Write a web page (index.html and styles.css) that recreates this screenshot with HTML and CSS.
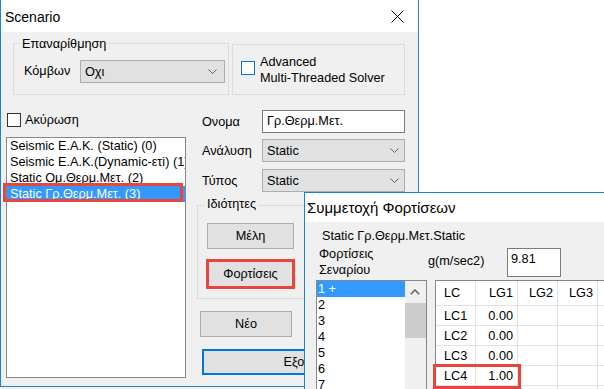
FILE: index.html
```html
<!DOCTYPE html>
<html>
<head>
<meta charset="utf-8">
<link rel="stylesheet" href="styles.css">
</head>
<body>
<div class="win main">
  <div class="titlebar">
    <span class="ttl">Scenario</span>
    <svg class="close" width="13" height="13" viewBox="0 0 13 13"><path d="M0.5 0.5 L12.5 12.5 M12.5 0.5 L0.5 12.5" stroke="#000" stroke-width="1" fill="none"/></svg>
  </div>
  <div class="mbody">
    <div class="toprow">
      <div class="group g1">
        <span class="legend">Επαναρίθμηση</span>
        <span class="g1lbl">Κόμβων</span>
        <div class="combo c145"><span>Οχι</span><svg class="chev" width="9" height="5" viewBox="0 0 9 5"><polyline points="0.5,0.5 4.5,4.5 8.5,0.5" fill="none" stroke="#606060" stroke-width="1"/></svg></div>
      </div>
      <div class="group g2">
        <span class="cb blue"></span>
        <span class="adv">Advanced<br>Multi-Threaded Solver</span>
      </div>
    </div>
    <div class="cols">
      <div class="leftcol">
        <div class="chkrow"><span class="cb dark"></span><span class="chklbl">Ακύρωση</span></div>
        <div class="listbox">
          <div class="item">Seismic E.A.K. (Static) (0)</div>
          <div class="item">Seismic E.A.K.(Dynamic-ετi) (1)</div>
          <div class="item">Static Ομ.Θερμ.Μετ. (2)</div>
          <div class="item sel">Static Γρ.Θερμ.Μετ. (3)</div>
          <span class="hlbox lb"></span>
        </div>
      </div>
      <div class="rightcol">
        <div class="frow"><span class="lbl">Ονομα</span><div class="input">Γρ.Θερμ.Μετ.</div></div>
        <div class="frow"><span class="lbl">Ανάλυση</span><div class="combo c143"><span>Static</span><svg class="chev" width="9" height="5" viewBox="0 0 9 5"><polyline points="0.5,0.5 4.5,4.5 8.5,0.5" fill="none" stroke="#606060" stroke-width="1"/></svg></div></div>
        <div class="frow r3"><span class="lbl">Τύπος</span><div class="combo c143"><span>Static</span><svg class="chev" width="9" height="5" viewBox="0 0 9 5"><polyline points="0.5,0.5 4.5,4.5 8.5,0.5" fill="none" stroke="#606060" stroke-width="1"/></svg></div></div>
        <div class="group props">
          <span class="legend lg2">Ιδιότητες</span>
          <div class="btn">Μέλη</div>
          <div class="btn hl">Φορτίσεις</div>
        </div>
        <div class="btn newb">Νέο</div>
        <div class="btn exitb">Εξοδος</div>
      </div>
    </div>
  </div>
</div>

<div class="win dlg">
  <div class="titlebar dtitle">Συμμετοχή Φορτίσεων</div>
  <div class="dbody">
    <div class="dline1">Static Γρ.Θερμ.Μετ.Static</div>
    <div class="drow2">
      <div class="fl">Φορτίσεις<br>Σεναρίου</div>
      <div class="gl">g(m/sec2)</div>
      <div class="gin">9.81</div>
    </div>
    <div class="listrow">
      <div class="dlist">
        <div class="items">
          <div class="ditem sel">1 +</div>
          <div class="ditem">2</div>
          <div class="ditem">3</div>
          <div class="ditem">4</div>
          <div class="ditem">5</div>
          <div class="ditem">6</div>
          <div class="ditem">7</div>
          <div class="ditem">8</div>
        </div>
        <div class="sbar">
          <div class="sarrow"><svg width="10" height="6" viewBox="0 0 10 6"><polyline points="0.8,5.2 5,1 9.2,5.2" fill="none" stroke="#606060" stroke-width="1.5"/></svg></div>
          <div class="thumb"></div>
        </div>
      </div>
      <div class="grid">
        <div class="gt">
          <div class="c l">LC</div><div class="c">LG1</div><div class="c">LG2</div><div class="c">LG3</div><div class="c"></div>
          <div class="c l">LC1</div><div class="c">0.00</div><div class="c"></div><div class="c"></div><div class="c"></div>
          <div class="c l">LC2</div><div class="c">0.00</div><div class="c"></div><div class="c"></div><div class="c"></div>
          <div class="c l">LC3</div><div class="c">0.00</div><div class="c"></div><div class="c"></div><div class="c"></div>
          <div class="c l">LC4</div><div class="c">1.00</div><div class="c"></div><div class="c"></div><div class="c"></div>
          <div class="c l">LC5</div><div class="c">0.00</div><div class="c"></div><div class="c"></div><div class="c"></div>
        </div>
        <span class="hlbox gb"></span>
      </div>
    </div>
  </div>
</div>
</body>
</html>
```

FILE: styles.css
```css
* { box-sizing: border-box; }
html, body {
  margin: 0;
  padding: 0;
  width: 604px;
  height: 389px;
  overflow: hidden;
}
html { background: linear-gradient(to bottom, #ffffff 387px, #f0f0f0 387px); }
body {
  font-family: "Liberation Sans", Arial, sans-serif;
  font-size: 12.7px;
  color: #000;
  position: relative;
}
.win {
  position: absolute;
  background: #f0f0f0;
  overflow: hidden;
}
.main {
  left: 0;
  top: 0;
  width: 419px;
  height: 387px;
  border: 1px solid #1883d7;
  border-top: 0;
}
.titlebar {
  background: #fff;
  display: flex;
  align-items: center;
  justify-content: space-between;
}
.main .titlebar {
  height: 32px;
  padding: 1px 14px 0 4px;
  font-size: 14px;
}
.close { display: block; }

.toprow {
  display: flex;
  align-items: flex-start;
  margin: 11px 0 0 12px;
}
.group {
  position: relative;
  border: 1px solid #dcdcdc;
}
.legend {
  position: absolute;
  top: -8px;
  left: 6px;
  padding: 0 2px;
  background: #f0f0f0;
  line-height: 16px;
  white-space: nowrap;
}
.g1 {
  width: 216px;
  height: 52px;
  padding: 16px 0 0 10px;
  display: flex;
  align-items: flex-start;
}
.g1lbl {
  width: 56px;
  line-height: 23px;
}
.g2 {
  width: 173px;
  height: 51px;
  margin: 1px 0 0 3px;
  padding: 9px 0 0 8px;
  display: flex;
  align-items: flex-start;
}
.cb {
  width: 14px;
  height: 14px;
  border: 1px solid #333;
  background: #fff;
  flex: none;
}
.cb.blue {
  border-color: #0078d7;
  margin-top: 7px;
}
.adv {
  margin-left: 5px;
  line-height: 16px;
}
.combo {
  height: 23px;
  background: #e1e1e1;
  border: 1px solid #adadad;
  display: flex;
  align-items: center;
  justify-content: space-between;
  padding: 0 5px 0 4px;
}
.c145 { width: 145px; padding-right: 7px; }
.c143 { width: 143px; }
.chev { display: block; }

.cols {
  display: flex;
  align-items: flex-start;
}
.leftcol {
  margin-left: 5px;
  padding-top: 17px;
  width: 180px;
}
.chkrow {
  display: flex;
  align-items: center;
  height: 16px;
}
.chkrow .cb { margin-left: 1px; }
.chklbl { margin-left: 4px; }
.listbox {
  position: relative;
  margin-top: 9px;
  height: 241px;
  border: 1px solid #828790;
  background: #fff;
}
.item {
  line-height: 16px;
  padding-left: 3px;
  white-space: nowrap;
  overflow: hidden;
}
.item.sel, .ditem.sel {
  background: #3399ff;
  color: #fff;
}
.hlbox {
  position: absolute;
  border: 3px solid #e8453c;
}
.hlbox.lb {
  left: -4px;
  top: 45px;
  width: 180px;
  height: 19px;
}

.rightcol {
  margin-left: 11px;
  padding-top: 15px;
  width: 210px;
}
.frow {
  display: flex;
  align-items: center;
  height: 23px;
}
.frow + .frow { margin-top: 6px; }
.frow.r3 { margin-top: 7px; }
.frow .lbl {
  width: 65px;
  padding-left: 5px;
}
.input {
  width: 143px;
  height: 23px;
  border: 1px solid #7a7a7a;
  background: #fff;
  padding-left: 4px;
  line-height: 21px;
}
.props {
  margin-top: 13px;
  width: 130px;
  height: 94px;
  padding: 17px 0 0 9px;
}
.lg2 { top: -10px; left: 7px; }
.btn {
  position: relative;
  width: 87px;
  height: 26px;
  background: #e1e1e1;
  border: 1px solid #adadad;
  display: flex;
  align-items: center;
  justify-content: center;
}
.btn.hl { margin-top: 12px; }
.btn.hl::after {
  content: "";
  position: absolute;
  left: -2px;
  right: -2px;
  top: -3px;
  bottom: -3px;
  border: 3px solid #e8453c;
}
.newb {
  margin: 12px 0 0 3px;
  width: 92px;
}
.exitb {
  margin: 12px 0 0 5px;
  width: 204px;
  border: 2px solid #0078d7;
}

.dlg {
  left: 304px;
  top: 192px;
  width: 310px;
  height: 210px;
  border: 1px solid #1883d7;
  border-right: 0;
  border-bottom: 0;
}
.dtitle {
  height: 29px;
  padding-left: 2px;
  font-size: 15px;
}
.dline1 {
  padding: 6px 0 0 17px;
  line-height: 16px;
}
.drow2 {
  display: flex;
  align-items: flex-start;
  height: 34px;
  margin-top: 2px;
}
.fl {
  margin-left: 14px;
  width: 109px;
  line-height: 16px;
}
.gl {
  margin-top: 7px;
  width: 79px;
  line-height: 16px;
}
.gin {
  margin-top: 2px;
  width: 54px;
  height: 29px;
  border: 1px solid #7a7a7a;
  background: #fff;
  padding: 2px 0 0 3px;
  line-height: 16px;
}
.listrow {
  display: flex;
  align-items: flex-start;
}
.dlist {
  margin-left: 11px;
  width: 111px;
  height: 130px;
  border: 1px solid #828790;
  background: #fff;
  display: flex;
}
.items { width: 88px; }
.ditem {
  line-height: 16px;
  padding-left: 1px;
}
.sbar {
  width: 21px;
  background: #f0f0f0;
}
.sarrow {
  height: 21px;
  display: flex;
  align-items: center;
  justify-content: center;
  padding-right: 1px;
}
.thumb {
  margin-top: 1px;
  height: 35px;
  background: #cdcdcd;
}
.grid {
  position: relative;
  margin-left: 8px;
  width: 200px;
  height: 130px;
  border-left: 1px solid #828790;
  border-top: 1px solid #828790;
  background: #fff;
}
.gt {
  display: grid;
  grid-template-columns: 40px 42px 40px 40px 40px;
  grid-template-rows: 25px repeat(5, 20px);
}
.c {
  border-right: 1px solid #e3e3e3;
  border-bottom: 1px solid #e3e3e3;
  display: flex;
  align-items: center;
  justify-content: flex-end;
  padding-right: 4px;
}
.c.l {
  justify-content: flex-start;
  padding: 0 0 0 8px;
}
.hlbox.gb {
  left: -3px;
  top: 83px;
  width: 88px;
  height: 25px;
}
```
